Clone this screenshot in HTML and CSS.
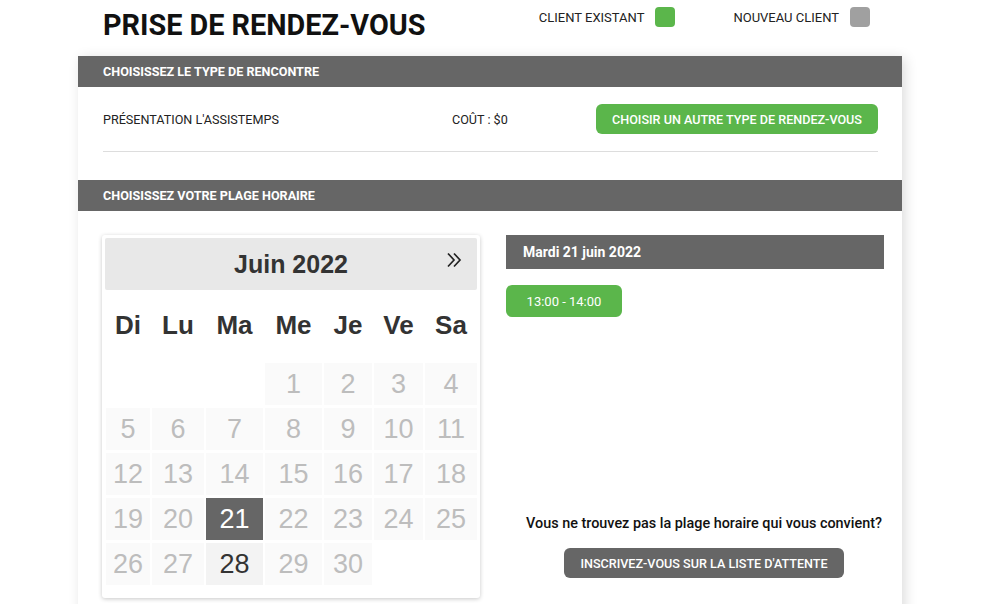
FILE: index.html
```html
<!DOCTYPE html>
<html lang="fr">
<head>
    <meta charset="UTF-8">
    <meta name="viewport" content="width=device-width, initial-scale=1.0">
    <title>Prise de rendez-vous</title>
    <link rel="stylesheet" href="styles.css">
</head>
<body>
    <div class="page">
        <header class="top">
            <h1>PRISE DE RENDEZ-VOUS</h1>
            <div class="legend">
                <span class="legend-item">CLIENT EXISTANT <i class="swatch swatch-green"></i></span>
                <span class="legend-item">NOUVEAU CLIENT <i class="swatch swatch-gray"></i></span>
            </div>
        </header>

        <div class="card">
            <div class="bar">CHOISISSEZ LE TYPE DE RENCONTRE</div>
            <div class="type-section">
                <div class="type-row">
                    <span>PRÉSENTATION L'ASSISTEMPS</span>
                    <span>COÛT : $0</span>
                    <button class="btn btn-green">CHOISIR UN AUTRE TYPE DE RENDEZ-VOUS</button>
                </div>
                <hr>
            </div>

            <div class="bar">CHOISISSEZ VOTRE PLAGE HORAIRE</div>
            <div class="slots">
                <div class="calendar">
                    <div class="cal-head">
                        <span></span>
                        <span class="cal-title">Juin 2022</span>
                        <span class="cal-next">
                            <svg width="16" height="16" viewBox="0 0 16 16"><path d="M2 1.5 L8 8 L2 14.5 M8 1.5 L14 8 L8 14.5" fill="none" stroke="#222" stroke-width="1.7"/></svg>
                        </span>
                    </div>
                    <div class="cal-grid">
                        <div class="dname">Di</div><div class="dname">Lu</div><div class="dname">Ma</div><div class="dname">Me</div><div class="dname">Je</div><div class="dname">Ve</div><div class="dname">Sa</div>

                        <div class="empty"></div><div class="empty"></div><div class="empty"></div>
                        <div class="day">1</div><div class="day">2</div><div class="day">3</div><div class="day">4</div>

                        <div class="day">5</div><div class="day">6</div><div class="day">7</div><div class="day">8</div><div class="day">9</div><div class="day">10</div><div class="day">11</div>

                        <div class="day">12</div><div class="day">13</div><div class="day">14</div><div class="day">15</div><div class="day">16</div><div class="day">17</div><div class="day">18</div>

                        <div class="day">19</div><div class="day">20</div><div class="day selected">21</div><div class="day">22</div><div class="day">23</div><div class="day">24</div><div class="day">25</div>

                        <div class="day">26</div><div class="day">27</div><div class="day available">28</div><div class="day">29</div><div class="day">30</div>
                    </div>
                </div>

                <div class="day-panel">
                    <div class="day-bar">Mardi 21 juin 2022</div>
                    <div class="times">
                        <button class="btn btn-green btn-time">13:00 - 14:00</button>
                    </div>
                    <div class="waitlist">
                        <p>Vous ne trouvez pas la plage horaire qui vous convient?</p>
                        <button class="btn btn-dark">INSCRIVEZ-VOUS SUR LA LISTE D'ATTENTE</button>
                    </div>
                </div>
            </div>
        </div>
    </div>
</body>
</html>
```

FILE: styles.css
```css
body {
    margin: 0;
    padding-right: 16px;
    font-family: Roboto, 'Liberation Sans', sans-serif;
    color: #222;
    background-color: #fff;
}
.page {
    width: 824px;
    margin: 0 auto;
}
.top {
    display: flex;
    justify-content: space-between;
    align-items: flex-start;
    height: 56px;
    padding: 0 32px 0 25px;
    box-sizing: border-box;
}
h1 {
    margin: 8px 0 0;
    font-size: 28.8px;
    font-weight: 700;
    color: #111;
    line-height: normal;
}
.legend {
    display: flex;
    gap: 58px;
    margin-top: 7px;
}
.legend-item {
    display: flex;
    align-items: center;
    gap: 11px;
    font-size: 13px;
    color: #222;
}
.swatch {
    display: inline-block;
    width: 20px;
    height: 20px;
    border-radius: 4px;
}
.swatch-green {
    background-color: #5bb64b;
}
.swatch-gray {
    background-color: #a0a0a0;
}
.card {
    background-color: #fff;
    box-shadow: 3px 2px 12px rgba(0, 0, 0, 0.14);
    padding-bottom: 24px;
}
.bar {
    height: 31px;
    line-height: 32px;
    padding-left: 25px;
    background-color: #666;
    color: #fff;
    font-size: 12.6px;
    font-weight: 700;
}
.type-section {
    padding: 17px 24px 28px 25px;
}
.type-row {
    display: grid;
    grid-template-columns: 349px 1fr auto;
    align-items: center;
    font-size: 12.6px;
}
hr {
    margin: 17px 0 0;
    border: none;
    border-top: 1px solid #ddd;
}
.btn {
    border: none;
    border-radius: 6px;
    color: #fff;
    font-family: Roboto, 'Liberation Sans', sans-serif;
    font-size: 12.6px;
    font-weight: 500;
    height: 30px;
    padding: 0 16px;
    cursor: pointer;
}
.btn-green {
    background-color: #5bb64b;
}
.btn-dark {
    background-color: #666;
}
.slots {
    display: flex;
    gap: 26px;
    padding: 24px 18px 0 24px;
}
.calendar {
    width: 378px;
    padding: 3px 3px 13px;
    box-sizing: border-box;
    border-radius: 3px;
    box-shadow: 0 1px 4px rgba(0, 0, 0, 0.22);
    font-family: 'Liberation Sans', Arial, sans-serif;
}
.cal-head {
    display: grid;
    grid-template-columns: 1fr auto 1fr;
    align-items: center;
    height: 52px;
    background-color: #e8e8e8;
    border-radius: 2px;
}
.cal-title {
    font-size: 25px;
    font-weight: 700;
    color: #333;
}
.cal-next {
    justify-self: end;
    margin: -8px 15px 0 0;
    display: flex;
}
.cal-grid {
    display: grid;
    grid-template-columns: 44px 52px 57px 57px 48px 49px 52px;
    grid-template-rows: 70px;
    grid-auto-rows: 42px;
    gap: 3px 2px;
    margin-left: 1px;
}
.dname {
    display: flex;
    align-items: center;
    justify-content: center;
    font-size: 26px;
    font-weight: 700;
    color: #333;
    margin-bottom: -1px;
}
.day {
    display: flex;
    align-items: center;
    justify-content: center;
    background-color: #fafafa;
    color: #bdbdbd;
    font-size: 27px;
}
.day.selected {
    background-color: #666;
    color: #fff;
}
.day.available {
    background-color: #f3f3f3;
    color: #333;
}
.day-panel {
    flex: 1;
    display: flex;
    flex-direction: column;
}
.day-bar {
    height: 34px;
    line-height: 34px;
    padding-left: 17px;
    background-color: #666;
    color: #fff;
    font-size: 14px;
    font-weight: 700;
}
.times {
    margin-top: 16px;
}
.btn-time {
    width: 116px;
    height: 32px;
    padding: 0;
    font-size: 13px;
    font-weight: 400;
}
.waitlist {
    margin: auto -18px 20px 0;
    text-align: center;
}
.waitlist p {
    margin: 0 0 16px;
    font-size: 14.4px;
    font-weight: 500;
    color: #111;
}
```
